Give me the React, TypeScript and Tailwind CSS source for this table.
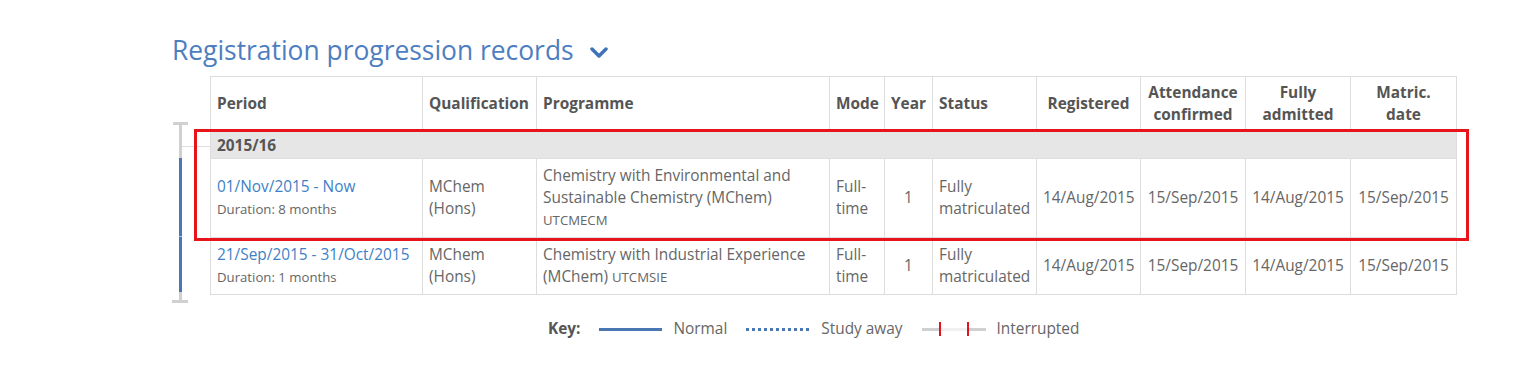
const rows = [
  {
    period: "01/Nov/2015 - Now",
    duration: "Duration: 8 months",
    qual: ["MChem", "(Hons)"],
    programme: "Chemistry with Environmental and Sustainable Chemistry (MChem)",
    code: "UTCMECM",
    mode: "Full-time",
    year: "1",
    status: "Fully matriculated",
    registered: "14/Aug/2015",
    attendance: "15/Sep/2015",
    admitted: "14/Aug/2015",
    matric: "15/Sep/2015",
  },
  {
    period: "21/Sep/2015 - 31/Oct/2015",
    duration: "Duration: 1 months",
    qual: ["MChem", "(Hons)"],
    programme: "Chemistry with Industrial Experience (MChem)",
    code: "UTCMSIE",
    mode: "Full-time",
    year: "1",
    status: "Fully matriculated",
    registered: "14/Aug/2015",
    attendance: "15/Sep/2015",
    admitted: "14/Aug/2015",
    matric: "15/Sep/2015",
  },
];

const th = "border border-[#dddddd] px-[6px] pt-[5px] pb-[3px] align-middle font-bold text-[#555555]";
const td = "border border-[#dddddd] px-[6px] py-[6px] align-middle text-[#666666]";

const Timeline = () => {
  return (
    <svg width="38" height="182" viewBox="0 0 38 182" className="block overflow-visible">
      <rect x="1" y="0" width="15" height="3" fill="#d0d0d0" />
      <rect x="7" y="0" width="3" height="36" fill="#d0d0d0" />
      <line x1="10" y1="24.5" x2="38" y2="24.5" stroke="#dddddd" strokeWidth="1" />
      <rect x="7" y="36" width="3" height="134" fill="#4a77b4" />
      <rect x="7" y="114" width="3" height="1" fill="#a9c0de" />
      <rect x="7" y="170" width="3" height="9" fill="#d0d0d0" />
      <rect x="0" y="178" width="16" height="3" fill="#d0d0d0" />
    </svg>
  );
};

const Chevron = () => (
  <svg width="18" height="12" viewBox="0 0 18 12" className="ml-[16px] mt-[6px]">
    <polyline points="2,2 9,9 16,2" fill="none" stroke="#3f74b8" strokeWidth="3.5" strokeLinecap="round" strokeLinejoin="round" />
  </svg>
);

export default function App() {
  return (
    <div
      className="relative h-[375px] overflow-hidden bg-white pl-[172px] pt-[34px] text-[15.4px] leading-[22px]"
      style={{ fontFamily: '"Open Sans", "Noto Sans", sans-serif' }}
    >
      <div className="flex items-center h-[32px]">
        <h2 className="text-[26.4px] leading-[32px] font-normal text-[#4d7ebf]">Registration progression records</h2>
        <Chevron />
      </div>

      <div className="mt-[10px] flex items-start">
        <div className="mt-[46px] h-[171px] w-[38px]">
          <Timeline />
        </div>
        <table className="table-fixed border-collapse w-[1246px]">
          <colgroup>
            <col className="w-[212px]" />
            <col className="w-[114px]" />
            <col className="w-[293px]" />
            <col className="w-[55px]" />
            <col className="w-[48px]" />
            <col className="w-[104px]" />
            <col className="w-[104px]" />
            <col className="w-[105px]" />
            <col className="w-[105px]" />
            <col className="w-[106px]" />
          </colgroup>
          <thead>
            <tr>
              <th className={`${th} text-left`}>Period</th>
              <th className={`${th} text-left`}>Qualification</th>
              <th className={`${th} text-left`}>Programme</th>
              <th className={`${th} text-left`}>Mode</th>
              <th className={`${th} text-left`}>Year</th>
              <th className={`${th} text-left`}>Status</th>
              <th className={`${th} text-center`}>Registered</th>
              <th className={`${th} text-center`}>Attendance confirmed</th>
              <th className={`${th} text-center`}>Fully admitted</th>
              <th className={`${th} text-center`}>Matric. date</th>
            </tr>
          </thead>
          <tbody>
            <tr className="bg-[#e6e6e6]">
              <td colSpan={10} className="border border-[#dddddd] px-[6px] pt-[5px] pb-[1px] font-bold text-[#555555]">
                2015/16
              </td>
            </tr>
            {rows.map((r) => (
              <tr key={r.period}>
                <td className={td}>
                  <div className="text-[#3f7fc6]">{r.period}</div>
                  <div className="text-[13.2px] text-[#666666]">{r.duration}</div>
                </td>
                <td className={td}>
                  {r.qual[0]}
                  <br />
                  {r.qual[1]}
                </td>
                <td className={td}>
                  {r.programme} <span className="text-[13.2px]">{r.code}</span>
                </td>
                <td className={td}>{r.mode}</td>
                <td className={`${td} text-center`}>{r.year}</td>
                <td className={td}>{r.status}</td>
                <td className={`${td} text-center`}>{r.registered}</td>
                <td className={`${td} text-center`}>{r.attendance}</td>
                <td className={`${td} text-center`}>{r.admitted}</td>
                <td className={`${td} text-center`}>{r.matric}</td>
              </tr>
            ))}
          </tbody>
        </table>
      </div>

      <div className="ml-[376px] mt-[23px] flex items-center text-[#666666]">
        <span className="font-bold text-[#555555]">Key:</span>
        <span className="ml-[19px] block h-[3px] w-[63px] bg-[#4a77b4]" />
        <span className="ml-[11px]">Normal</span>
        <span className="ml-[19px] block h-[3px] w-[63px] border-t-[3px] border-dotted border-[#4a77b4]" />
        <span className="ml-[12px]">Study away</span>
        <svg width="64" height="16" viewBox="0 0 64 16" className="ml-[19px]">
          <rect x="0" y="7" width="17" height="3" fill="#d0d0d0" />
          <rect x="19" y="7" width="26" height="3" fill="#f0f0f0" />
          <rect x="47" y="7" width="17" height="3" fill="#d0d0d0" />
          <rect x="17" y="1" width="2" height="14" fill="#e0141b" />
          <rect x="45" y="1" width="2" height="14" fill="#e0141b" />
        </svg>
        <span className="ml-[11px]">Interrupted</span>
      </div>

      <div className="pointer-events-none absolute left-[194px] top-[129px] h-[112px] w-[1275px] border-[3px] border-[#e8141b]" />
    </div>
  );
}
